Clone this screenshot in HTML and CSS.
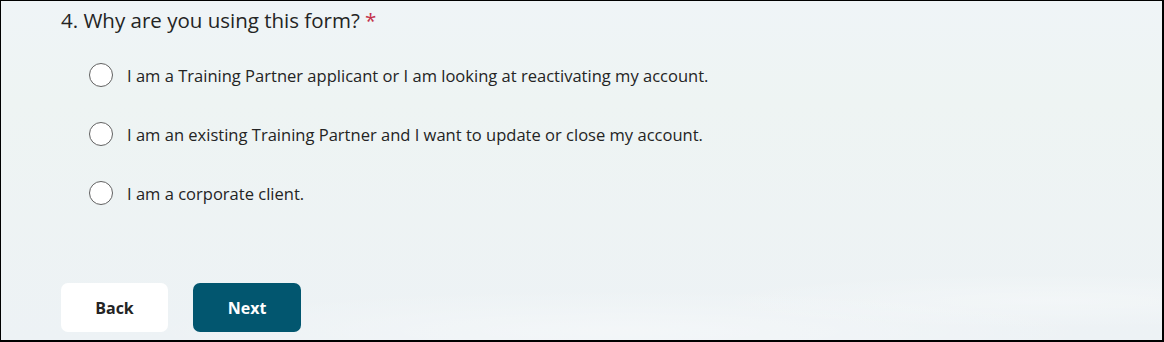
FILE: index.html
```html
<!DOCTYPE html>
<html lang="en">
<head>
<meta charset="utf-8">
<title>Form question</title>
<link rel="stylesheet" href="styles.css">
</head>
<body>
<div class="frame">
  <div class="question">
    <div class="title">4. Why are you using this form? <span class="req">*</span></div>
    <div class="options">
      <label class="option"><span class="radio"></span><span class="label">I am a Training Partner applicant or I am looking at reactivating my account.</span></label>
      <label class="option"><span class="radio"></span><span class="label">I am an existing Training Partner and I want to update or close my account.</span></label>
      <label class="option"><span class="radio"></span><span class="label">I am a corporate client.</span></label>
    </div>
  </div>
  <div class="actions">
    <button class="btn back">Back</button>
    <button class="btn next">Next</button>
  </div>
</div>
</body>
</html>
```
FILE: styles.css
```css
html, body {
  margin: 0;
  padding: 0;
}
body {
  width: 1164px;
  height: 342px;
  overflow: hidden;
  font-family: "Open Sans", "Noto Sans", sans-serif;
  color: #242424;
}
.frame {
  box-sizing: border-box;
  width: 1164px;
  height: 342px;
  border-style: solid;
  border-color: #000;
  border-width: 1px 2px 2px 1px;
  background:
    radial-gradient(ellipse 700px 60px at 620px 330px, rgba(255,255,255,0.35), rgba(255,255,255,0) 70%),
    radial-gradient(ellipse 500px 40px at 1050px 300px, rgba(255,255,255,0.3), rgba(255,255,255,0) 70%),
    linear-gradient(180deg, #eff4f7 0%, #eef4f3 30%, #edf2f5 100%);
  display: flex;
  flex-direction: column;
  justify-content: space-between;
  padding: 6px 0 8px 60px;
}
.title {
  font-size: 20.5px;
  line-height: 26px;
  color: #242424;
}
.req {
  color: #c4314b;
}
.options {
  display: flex;
  flex-direction: column;
  gap: 35px;
  margin-top: 30px;
  padding-left: 28px;
}
.option {
  display: flex;
  align-items: center;
  gap: 14px;
  height: 24px;
  font-size: 16.55px;
}
.radio {
  box-sizing: border-box;
  width: 24px;
  height: 24px;
  border: 1.5px solid #616161;
  border-radius: 50%;
  background: #fff;
  flex: none;
}
.actions {
  display: flex;
  gap: 25px;
}
.btn {
  width: 107px;
  height: 49px;
  border: none;
  border-radius: 7px;
  font-family: "Open Sans", "Noto Sans", sans-serif;
  font-size: 16px;
  font-weight: 700;
  cursor: pointer;
}
.back {
  background: #fff;
  color: #242424;
}
.next {
  width: 108px;
  background: #02566f;
  color: #fff;
}
```
